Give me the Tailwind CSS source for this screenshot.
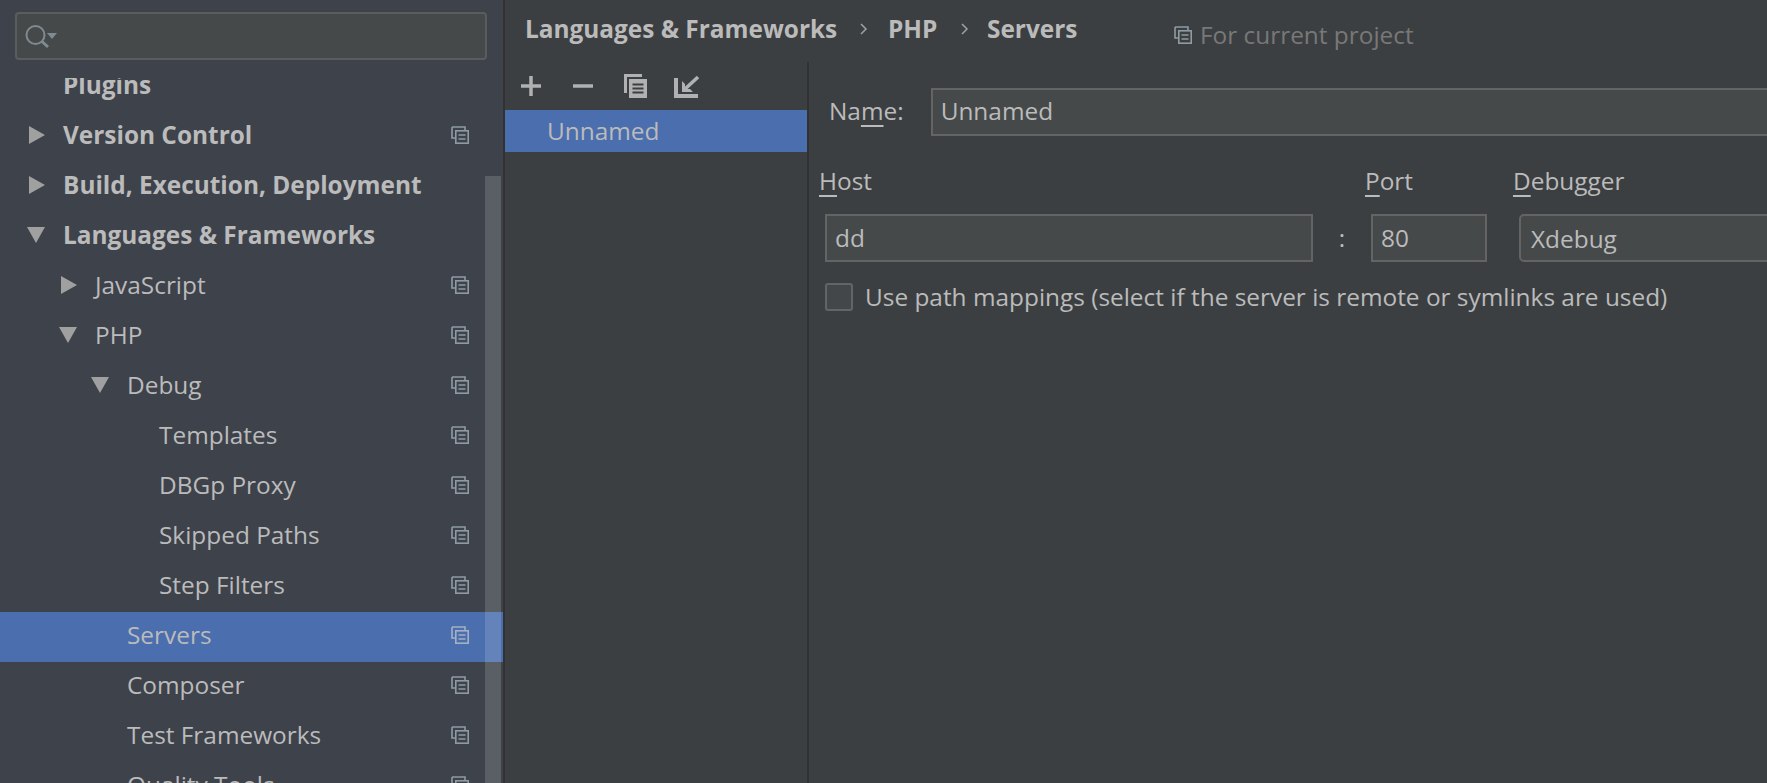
<!DOCTYPE html>
<html><head><meta charset="utf-8"><script src="https://cdn.jsdelivr.net/npm/@tailwindcss/browser@4"></script></head>
<body class="overflow-hidden">
<svg width="0" height="0" class="absolute"><defs>
<symbol id="proj" viewBox="0 0 18 18"><path d="M1 1h13v3M1 1v11h3" fill="none" stroke="currentColor" stroke-width="1.6"/><rect x="4.8" y="4.8" width="12.4" height="12.4" fill="none" stroke="currentColor" stroke-width="1.6"/><path d="M7.5 9h7M7.5 13h7" stroke="currentColor" stroke-width="1.6"/></symbol>
<symbol id="right" viewBox="0 0 16 18"><path d="M0 0L16 9L0 18Z" fill="currentColor"/></symbol>
<symbol id="down" viewBox="0 0 18 16"><path d="M0 0H18L9 16Z" fill="currentColor"/></symbol>
</defs></svg>
<div class="flex w-[1767px] h-[783px] overflow-hidden bg-[#3c3f41] text-[#bbbbbb] text-[24.4px] font-['Open_Sans','Noto_Sans',sans-serif]">
  <!-- Sidebar -->
  <aside class="relative w-[503px] shrink-0 h-full bg-[#3e424b] overflow-hidden">
    <div class="relative z-10 h-[78px] -mb-[16px] bg-[#3e424b] pt-[12px] pl-[15px] pr-[16px]">
      <div class="h-[48px] rounded-[4px] border-2 border-[#5a5c5e] bg-[#45494a] flex items-center pl-[8px]">
        <svg width="32" height="32" viewBox="0 0 32 32" class="text-[#7f8b91]"><circle cx="10.500" cy="15" r="9" fill="none" stroke="currentColor" stroke-width="2"/><path d="M17 21.500l6 5.500" stroke="currentColor" stroke-width="3"/><path d="M22 13h10l-5 6z" fill="currentColor"/></svg>
      </div>
    </div>
    <div class="flex flex-col">
      <div class="h-[50px] flex items-center pl-[63px] pr-[34px] pb-[4px] font-bold"><span class="flex-1">Plugins</span></div>
      <div class="h-[50px] flex items-center pl-[29px] pr-[34px] pb-[4px] font-bold"><svg class="w-[16px] h-[18px] mr-[18px] text-[#a0a0a0]"><use href="#right"/></svg><span class="flex-1">Version Control</span><svg class="w-[18px] h-[18px] text-[#8f9ba3]"><use href="#proj"/></svg></div>
      <div class="h-[50px] flex items-center pl-[29px] pr-[34px] pb-[4px] font-bold"><svg class="w-[16px] h-[18px] mr-[18px] text-[#a0a0a0]"><use href="#right"/></svg><span class="flex-1">Build, Execution, Deployment</span></div>
      <div class="h-[50px] flex items-center pl-[27px] pr-[34px] pb-[4px] font-bold"><svg class="w-[18px] h-[16px] mr-[18px] text-[#a0a0a0]"><use href="#down"/></svg><span class="flex-1">Languages &amp; Frameworks</span></div>
      <div class="h-[50px] flex items-center pl-[61px] pr-[34px] pb-[4px]"><svg class="w-[16px] h-[18px] mr-[18px] text-[#a0a0a0]"><use href="#right"/></svg><span class="flex-1">JavaScript</span><svg class="w-[18px] h-[18px] text-[#8f9ba3]"><use href="#proj"/></svg></div>
      <div class="h-[50px] flex items-center pl-[59px] pr-[34px] pb-[4px]"><svg class="w-[18px] h-[16px] mr-[18px] text-[#a0a0a0]"><use href="#down"/></svg><span class="flex-1">PHP</span><svg class="w-[18px] h-[18px] text-[#8f9ba3]"><use href="#proj"/></svg></div>
      <div class="h-[50px] flex items-center pl-[91px] pr-[34px] pb-[4px]"><svg class="w-[18px] h-[16px] mr-[18px] text-[#a0a0a0]"><use href="#down"/></svg><span class="flex-1">Debug</span><svg class="w-[18px] h-[18px] text-[#8f9ba3]"><use href="#proj"/></svg></div>
      <div class="h-[50px] flex items-center pl-[159px] pr-[34px] pb-[4px]"><span class="flex-1">Templates</span><svg class="w-[18px] h-[18px] text-[#8f9ba3]"><use href="#proj"/></svg></div>
      <div class="h-[50px] flex items-center pl-[159px] pr-[34px] pb-[4px]"><span class="flex-1">DBGp Proxy</span><svg class="w-[18px] h-[18px] text-[#8f9ba3]"><use href="#proj"/></svg></div>
      <div class="h-[50px] flex items-center pl-[159px] pr-[34px] pb-[4px]"><span class="flex-1">Skipped Paths</span><svg class="w-[18px] h-[18px] text-[#8f9ba3]"><use href="#proj"/></svg></div>
      <div class="h-[50px] flex items-center pl-[159px] pr-[34px] pb-[4px]"><span class="flex-1">Step Filters</span><svg class="w-[18px] h-[18px] text-[#8f9ba3]"><use href="#proj"/></svg></div>
      <div class="h-[50px] flex items-center pl-[127px] pr-[34px] pb-[4px] bg-[#4b6eaf]"><span class="flex-1">Servers</span><svg class="w-[18px] h-[18px] text-[#a3b1c2]"><use href="#proj"/></svg></div>
      <div class="h-[50px] flex items-center pl-[127px] pr-[34px] pb-[4px]"><span class="flex-1">Composer</span><svg class="w-[18px] h-[18px] text-[#8f9ba3]"><use href="#proj"/></svg></div>
      <div class="h-[50px] flex items-center pl-[127px] pr-[34px] pb-[4px]"><span class="flex-1">Test Frameworks</span><svg class="w-[18px] h-[18px] text-[#8f9ba3]"><use href="#proj"/></svg></div>
      <div class="h-[50px] flex items-center pl-[127px] pr-[34px] pb-[4px]"><span class="flex-1">Quality Tools</span><svg class="w-[18px] h-[18px] text-[#8f9ba3]"><use href="#proj"/></svg></div>
    </div>
    <div class="absolute right-[2px] top-[176px] bottom-0 w-[16px] bg-white/15"></div>
  </aside>
  <div class="w-[2px] bg-[#323232] shrink-0"></div>
  <!-- Main -->
  <main class="flex-1 min-w-0 flex flex-col">
    <header class="h-[62px] shrink-0 flex items-center pl-[20px] pb-[4px] whitespace-nowrap">
      <span class="font-bold w-[334px]">Languages &amp; Frameworks</span>
      <span class="w-[29px] text-[#a0a0a0]"><svg width="10" height="14" viewBox="0 0 10 14"><path d="M2 2l5 5-5 5" fill="none" stroke="currentColor" stroke-width="1.500"/></svg></span>
      <span class="font-bold w-[72px]">PHP</span>
      <span class="w-[27px] text-[#a0a0a0]"><svg width="10" height="14" viewBox="0 0 10 14"><path d="M2 2l5 5-5 5" fill="none" stroke="currentColor" stroke-width="1.500"/></svg></span>
      <span class="font-bold w-[187px]">Servers</span>
      <span class="flex items-center gap-[8px] text-[#787878] pt-[12px]"><svg class="w-[18px] h-[18px] text-[#8f9ba3]"><use href="#proj"/></svg>For current project</span>
    </header>
    <div class="flex-1 flex min-h-0">
      <section class="w-[302px] shrink-0">
        <div class="h-[48px] flex items-center pl-[14px] gap-[26px] text-[#afb1b3]">
          <svg width="26" height="26" viewBox="0 0 26 26" class="-ml-[1px]"><path d="M13 3v20M3 13h20" stroke="currentColor" stroke-width="3.500"/></svg>
          <svg width="26" height="26" viewBox="0 0 26 26"><path d="M3 13h20" stroke="currentColor" stroke-width="3.500"/></svg>
          <svg width="26" height="26" viewBox="0 0 26 26"><path d="M2 20V1h18v3H5v16z" fill="currentColor"/><path d="M7 6h18v19H7z" fill="currentColor"/><path d="M10.500 11.500h11M10.500 15.500h11M10.500 19.500h11" stroke="#3c3f41" stroke-width="1.800"/></svg>
          <svg width="26" height="26" viewBox="0 0 26 26" class="-ml-[1px]"><path d="M1 5h4v16h20v4H1z" fill="currentColor"/><path d="M25 4L12 16" stroke="currentColor" stroke-width="3.500"/><path d="M9 8v11h11l-3-3h-5v-5z" fill="currentColor"/></svg>
        </div>
        <div class="h-[42px] bg-[#4b6eaf] flex items-center pl-[42px]">Unnamed</div>
      </section>
      <div class="w-[2px] bg-[#323232] shrink-0"></div>
      <section class="flex-1 min-w-0 overflow-hidden">
        <div class="flex items-center h-[48px] mt-[26px] pl-[20px] gap-[27px]">
          <span class="w-[76px] pb-[2px]">Na<span class="underline underline-offset-[5px]">m</span>e:</span>
          <div class="w-[900px] h-[48px] shrink-0 border-2 border-[#646464] bg-[#45494a] flex items-center pl-[8px] pb-[2px]">Unnamed</div>
        </div>
        <div class="grid grid-cols-[488px_58px_116px_32px_260px] w-max pl-[16px] pt-[22px] items-center">
          <span class="-ml-[6px] h-[46px] flex items-center"><span><span class="underline underline-offset-[5px]">H</span>ost</span></span>
          <span></span>
          <span class="-ml-[6px] flex items-center"><span><span class="underline underline-offset-[5px]">P</span>ort</span></span>
          <span></span>
          <span class="-ml-[6px]"><span class="underline underline-offset-[5px]">D</span>ebugger</span>
          <div class="mt-[10px] h-[48px] border-2 border-[#646464] bg-[#45494a] flex items-center pl-[8px]">dd</div>
          <span class="mt-[10px] text-center">:</span>
          <div class="mt-[10px] h-[48px] border-2 border-[#646464] bg-[#45494a] flex items-center pl-[8px]">80</div>
          <span></span>
          <div class="mt-[10px] h-[48px] border-2 border-[#646464] rounded-l-[5px] bg-[#45494a] flex items-center pl-[10px] pt-[2px]">Xdebug</div>
        </div>
        <div class="flex items-center gap-[12px] pl-[16px] mt-[17px] whitespace-nowrap">
          <span class="w-[28px] h-[28px] border-2 border-[#646464] rounded-[3px] bg-[#43474a]"></span>
          <span>Use path mappings (select if the server is remote or symlinks are used)</span>
        </div>
      </section>
    </div>
  </main>
</div>
</body></html>
